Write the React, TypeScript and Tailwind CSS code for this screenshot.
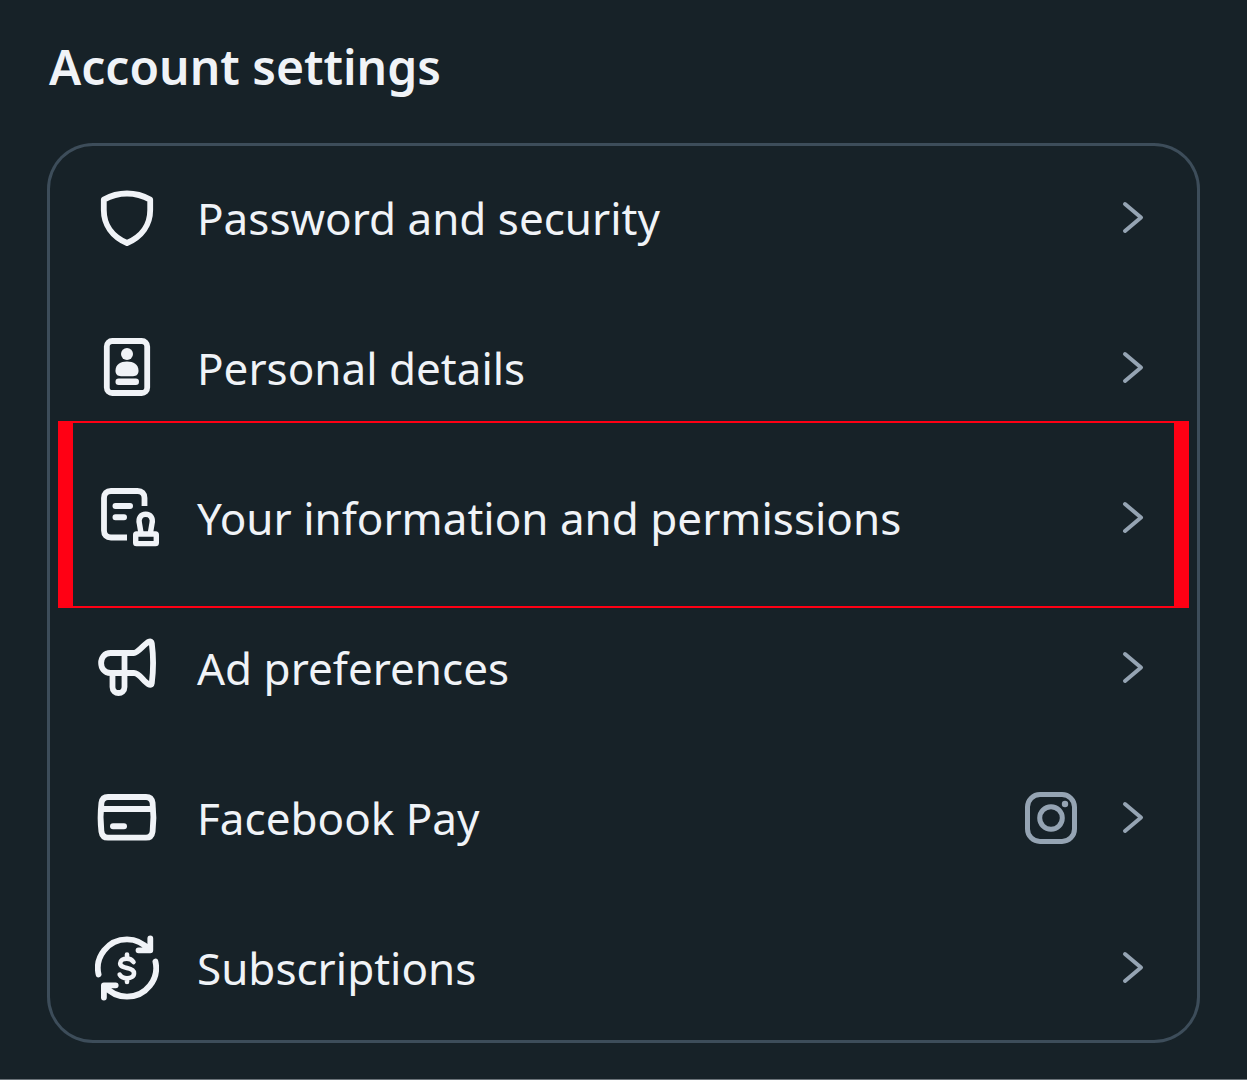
import type { ReactNode } from "react";

function Icon({ children }: { children: ReactNode }) {
  return (
    <svg
      viewBox="15 7 64 72"
      className="h-[72px] w-16 shrink-0"
      fill="none"
      stroke="currentColor"
      strokeWidth="5.8"
      strokeLinecap="round"
      strokeLinejoin="round"
      aria-hidden="true"
    >
      {children}
    </svg>
  );
}

const shield = (
  <Icon>
    <path d="M47 18.5C55 18.5 63 20.6 70.2 24.6V35C70.2 49.5 62 61.5 47 68C32 61.5 23.8 49.5 23.8 35V24.6C31 20.6 39 18.5 47 18.5Z" />
  </Icon>
);

const badge = (
  <Icon>
    <rect x="26.8" y="16" width="40.4" height="52" rx="5.5" />
    <g fill="currentColor" stroke="none">
      <circle cx="47" cy="29" r="6" />
      <path d="M35.5 45.5C35.5 39.5 40.5 36.5 47 36.5S58.5 39.5 58.5 45.5C58.5 49.5 56.5 51.2 53 51.2H41C37.5 51.2 35.5 49.5 35.5 45.5Z" />
      <rect x="35.5" y="53.5" width="23.5" height="6.5" rx="3.2" />
    </g>
  </Icon>
);

const documentStamp = (
  <Icon>
    <path strokeLinecap="butt" d="M64.5 31V23C64.5 18.5 62 16 57.5 16H31C26.5 16 24 18.5 24 23V55.5C24 60 26.5 62.5 31 62.5H47" />
    <path strokeWidth="6" d="M35.5 31H50M35.5 42.3H44" />
    <path strokeWidth="5.4" d="M61 58L59.4 48.5C58 43 61 39.3 65.7 39.3S73.400 43 72 48.5L70.4 58" />
    <rect x="55.7" y="59" width="20.6" height="9.6" rx="0.8" strokeWidth="5.4" />
  </Icon>
);

const megaphone = (
  <Icon>
    <path d="M44.500 28H30.500C18 28 18 48 30.500 48H54C60 48 64 58 69.500 59.700C70.800 60 71.600 59.500 71.800 58C73.200 47 73.200 29 71.800 18.500C71.600 16.800 70.500 16 69 16.700C64 19 58 28 54 28H44.500V62C44.500 70 32.500 70 32.500 62V50" />
  </Icon>
);

const card = (
  <Icon>
    <path d="M28 22H66C70 22 72 24 72.600 28C73.600 37 73.600 48 72.600 56.500C72 60.500 70 62.700 66 62.700H28C24 62.700 22 60.500 21.400 56.500C20.400 48 20.400 37 21.400 28C22 24 24 22 28 22ZM21 34H73" />
    <path strokeWidth="6" d="M33 51.200H44" />
  </Icon>
);

const renewal = (
  <Icon>
    <path d="M18.600 49.500C14.500 32 28 14.300 47 14.300C56 14.300 63.500 18 69.500 25M70.300 13.500V25.300H58.500" />
    <path d="M75.400 36.500C79.500 54 66 71.700 47 71.700C38 71.700 30.500 68 24.500 61M23.900 72.500V60.300H35.700" />
    <path strokeWidth="4.600" d="M47 29.500V33M47 53.500V57M53.500 37C51.800 34.500 49.500 33.600 46.800 33.600C43 33.600 40.200 35.400 40.200 38.300C40.200 41.500 43.300 42.200 47 43C51 43.800 54 44.900 54 48.200C54 51.400 51 53.200 47 53.200C43.500 53.200 41 52 39.700 49.600" />
  </Icon>
);

function Instagram() {
  return (
    <svg viewBox="0 0 54 54" className="size-[54px]" fill="none" stroke="currentColor" strokeWidth="5" role="img" aria-label="Instagram">
      <rect x="3.500" y="3.500" width="47" height="47" rx="12.500" />
      <circle cx="27" cy="27" r="11.300" />
      <circle cx="41" cy="13" r="3.200" fill="currentColor" stroke="none" />
    </svg>
  );
}

function Chevron() {
  return (
    <svg viewBox="0 0 24 36" className="h-9 w-6" fill="none" stroke="currentColor" strokeWidth="4" strokeLinecap="round" strokeLinejoin="round" aria-hidden="true">
      <path d="M4 4L20 17.500L4 31" />
    </svg>
  );
}

type Item = { label: string; icon: ReactNode; trailing?: ReactNode; highlighted?: boolean };

const items: Item[] = [
  { label: "Password and security", icon: shield },
  { label: "Personal details", icon: badge },
  { label: "Your information and permissions", icon: documentStamp, highlighted: true },
  { label: "Ad preferences", icon: megaphone },
  { label: "Facebook Pay", icon: card, trailing: <Instagram /> },
  { label: "Subscriptions", icon: renewal },
];

export default function App() {
  return (
    <main className="min-h-screen border-b border-[#6b7379] bg-[#172228] px-[47px] pt-9 pb-9 font-['Noto_Sans',sans-serif] text-[#f0f3f7]">
      <h1 className="pl-0.5 text-[48px] leading-[62px] font-semibold">Account settings</h1>
      <ul className="mt-[45px] rounded-[46px] ring-3 ring-[#3d4d5a] ring-inset">
        {items.map((item) => (
          <li key={item.label} className="relative">
            <a href="#" className="flex h-[150px] items-center pr-[55px] pl-12">
              {item.icon}
              <span className="ml-[38px] flex-1 text-[44px] leading-[60px] whitespace-nowrap">{item.label}</span>
              <span className="flex items-center gap-[43px] text-[#95a4b3]">
                {item.trailing}
                <Chevron />
              </span>
            </a>
            {item.highlighted && (
              <span className="pointer-events-none absolute -top-[22px] right-[11px] -bottom-[15px] left-[11px] border-x-[15px] border-y-2 border-[#ff0014]" />
            )}
          </li>
        ))}
      </ul>
    </main>
  );
}
